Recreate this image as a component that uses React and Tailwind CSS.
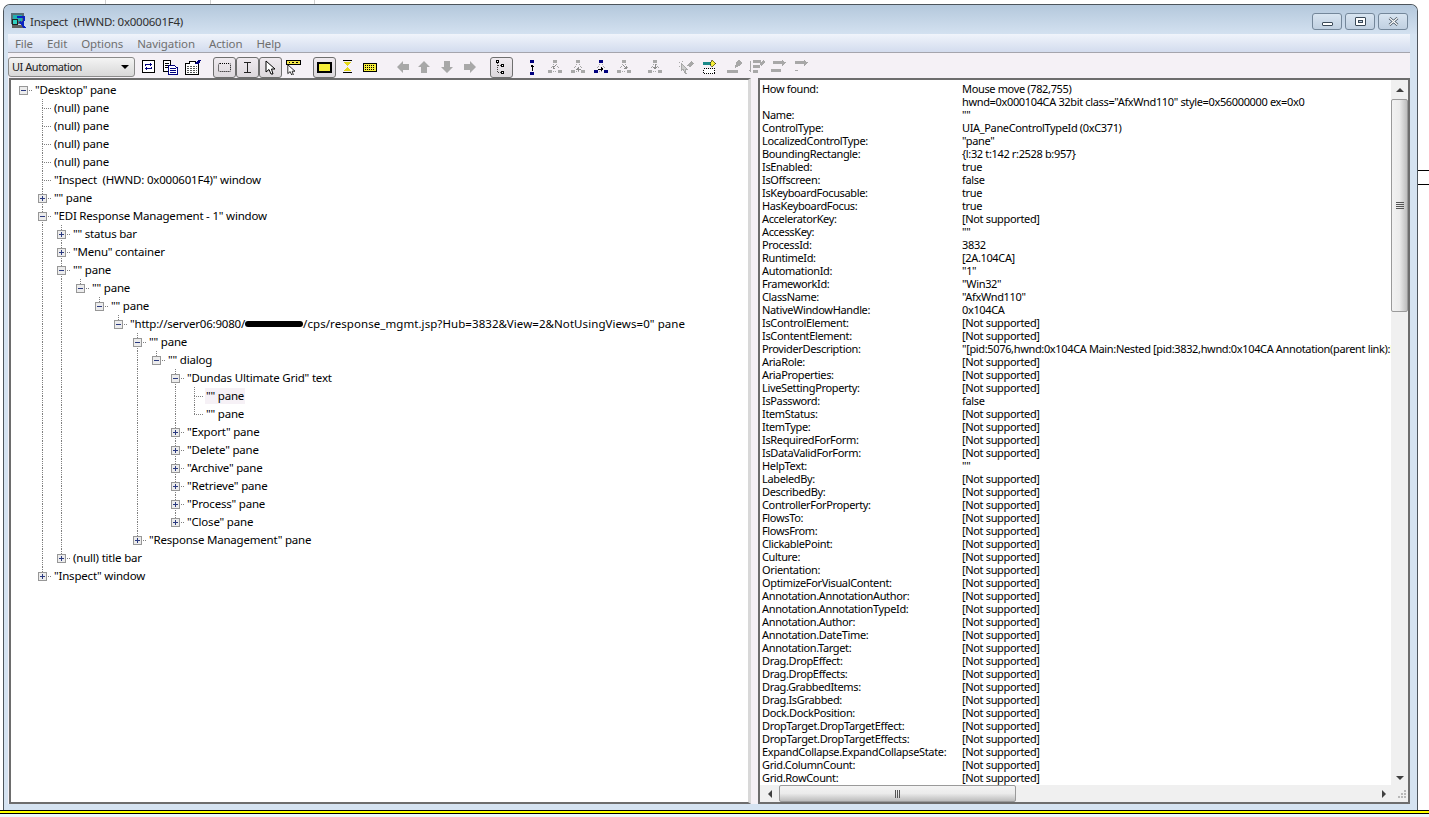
const NOT = '[Not supported]';

const props = [
  ['How found:', 'Mouse move (782,755)'],
  ['', 'hwnd=0x000104CA 32bit class="AfxWnd110" style=0x56000000 ex=0x0'],
  ['Name:', '""'],
  ['ControlType:', 'UIA_PaneControlTypeId (0xC371)'],
  ['LocalizedControlType:', '"pane"'],
  ['BoundingRectangle:', '{l:32 t:142 r:2528 b:957}'],
  ['IsEnabled:', 'true'],
  ['IsOffscreen:', 'false'],
  ['IsKeyboardFocusable:', 'true'],
  ['HasKeyboardFocus:', 'true'],
  ['AcceleratorKey:', NOT],
  ['AccessKey:', '""'],
  ['ProcessId:', '3832'],
  ['RuntimeId:', '[2A.104CA]'],
  ['AutomationId:', '"1"'],
  ['FrameworkId:', '"Win32"'],
  ['ClassName:', '"AfxWnd110"'],
  ['NativeWindowHandle:', '0x104CA'],
  ['IsControlElement:', NOT],
  ['IsContentElement:', NOT],
  ['ProviderDescription:', '"[pid:5076,hwnd:0x104CA Main:Nested [pid:3832,hwnd:0x104CA Annotation(parent link):M'],
  ['AriaRole:', NOT],
  ['AriaProperties:', NOT],
  ['LiveSettingProperty:', NOT],
  ['IsPassword:', 'false'],
  ['ItemStatus:', NOT],
  ['ItemType:', NOT],
  ['IsRequiredForForm:', NOT],
  ['IsDataValidForForm:', NOT],
  ['HelpText:', '""'],
  ['LabeledBy:', NOT],
  ['DescribedBy:', NOT],
  ['ControllerForProperty:', NOT],
  ['FlowsTo:', NOT],
  ['FlowsFrom:', NOT],
  ['ClickablePoint:', NOT],
  ['Culture:', NOT],
  ['Orientation:', NOT],
  ['OptimizeForVisualContent:', NOT],
  ['Annotation.AnnotationAuthor:', NOT],
  ['Annotation.AnnotationTypeId:', NOT],
  ['Annotation.Author:', NOT],
  ['Annotation.DateTime:', NOT],
  ['Annotation.Target:', NOT],
  ['Drag.DropEffect:', NOT],
  ['Drag.DropEffects:', NOT],
  ['Drag.GrabbedItems:', NOT],
  ['Drag.IsGrabbed:', NOT],
  ['Dock.DockPosition:', NOT],
  ['DropTarget.DropTargetEffect:', NOT],
  ['DropTarget.DropTargetEffects:', NOT],
  ['ExpandCollapse.ExpandCollapseState:', NOT],
  ['Grid.ColumnCount:', NOT],
  ['Grid.RowCount:', NOT],
];

const tree = {
  label: '"Desktop" pane',
  open: true,
  children: [
    { label: '(null) pane' },
    { label: '(null) pane' },
    { label: '(null) pane' },
    { label: '(null) pane' },
    { label: '"Inspect  (HWND: 0x000601F4)" window' },
    { label: '"" pane', open: false },
    {
      label: '"EDI Response Management - 1" window',
      open: true,
      children: [
        { label: '"" status bar', open: false },
        { label: '"Menu" container', open: false },
        {
          label: '"" pane',
          open: true,
          children: [
            {
              label: '"" pane',
              open: true,
              children: [
                {
                  label: '"" pane',
                  open: true,
                  children: [
                    {
                      url: true,
                      open: true,
                      children: [
                        {
                          label: '"" pane',
                          open: true,
                          children: [
                            {
                              label: '"" dialog',
                              open: true,
                              children: [
                                {
                                  label: '"Dundas Ultimate Grid" text',
                                  open: true,
                                  children: [
                                    { label: '"" pane', hover: true },
                                    { label: '"" pane' },
                                  ],
                                },
                                { label: '"Export" pane', open: false },
                                { label: '"Delete" pane', open: false },
                                { label: '"Archive" pane', open: false },
                                { label: '"Retrieve" pane', open: false },
                                { label: '"Process" pane', open: false },
                                { label: '"Close" pane', open: false },
                              ],
                            },
                          ],
                        },
                        { label: '"Response Management" pane', open: false },
                      ],
                    },
                  ],
                },
              ],
            },
          ],
        },
        { label: '(null) title bar', open: false },
      ],
    },
    { label: '"Inspect" window', open: false },
  ],
};

function Guide({ up, down, stub, open }) {
  return (
    <svg width="19" height="18" className="shrink-0" shapeRendering="crispEdges">
      {up && <line x1="9.5" y1="0" x2="9.5" y2="9" stroke="#808080" strokeDasharray="1 1" />}
      {down && <line x1="9.5" y1="9" x2="9.5" y2="18" stroke="#808080" strokeDasharray="1 1" />}
      {stub && <line x1="9" y1="9.5" x2="19" y2="9.5" stroke="#808080" strokeDasharray="1 1" />}
      {open !== undefined && (
        <>
          <rect x="5.5" y="5.5" width="8" height="8" fill="#ececec" stroke="#979797" />
          <line x1="7" y1="9.5" x2="12" y2="9.5" stroke="#2b3a80" />
          {!open && <line x1="9.5" y1="7" x2="9.5" y2="12" stroke="#2b3a80" />}
        </>
      )}
    </svg>
  );
}

function TreeNode({ node, trail, last, root }) {
  return (
    <>
      <div className="flex h-[18px] items-center">
        {trail.map((more, i) => (
          <Guide key={i} up={more} down={more} />
        ))}
        <Guide up={!root} down={!root && !last} stub open={node.open} />
        <span
          className={`ml-[1px] whitespace-pre px-[1px] leading-[16px] ${node.hover ? 'bg-[#f6f1f6]' : ''}`}
        >
          {node.url ? (
            <>
              "http://server06:9080/
              <span className="inline-block h-[6px] w-[58px] rounded-full bg-black align-[1px]" />
              <span className="tracking-[0.07px]">
                /cps/response_mgmt.jsp?Hub=3832&amp;View=2&amp;NotUsingViews=0" pane
              </span>
            </>
          ) : (
            node.label
          )}
        </span>
      </div>
      {node.children &&
        node.children.map((child, i) => (
          <TreeNode
            key={i}
            node={child}
            trail={root ? [false] : [...trail, !last]}
            last={i === node.children.length - 1}
          />
        ))}
    </>
  );
}

function ToolBtn({ children, className = '' }) {
  return (
    <div
      className={`flex h-[21px] w-[23px] shrink-0 items-center justify-center rounded-[3px] border border-[#6f6f6f] bg-gradient-to-b from-[#efeaef] to-[#dcd8dc] ${className}`}
    >
      {children}
    </div>
  );
}

function Ic({ w = 16, h = 16, children, className = '' }) {
  return (
    <svg
      width={w}
      height={h}
      viewBox={`0 0 ${w} ${h}`}
      shapeRendering="crispEdges"
      className={`shrink-0 ${className}`}
    >
      {children}
    </svg>
  );
}

function Arrow({ dir, className }) {
  const paths = {
    left: 'M1 7 L7 1 V4 H13 V10 H7 V13 Z',
    up: 'M7 1 L13 7 H10 V13 H4 V7 H1 Z',
    down: 'M7 13 L13 7 H10 V1 H4 V7 H1 Z',
    right: 'M13 7 L7 1 V4 H1 V10 H7 V13 Z',
  };
  return (
    <Ic w={14} h={14} className={className}>
      <path d={paths[dir]} fill="#a8a8a8" shapeRendering="auto" />
    </Ic>
  );
}

function TreeIc({ dark, mark, className }) {
  const c = dark ? '#00007f' : '#a8a8a8';
  return (
    <Ic w={14} h={14} className={className}>
      <rect x="5" y="0" width="4" height="3" fill={c} />
      <rect x="0" y="10" width="4" height="3" fill={c} />
      <rect x="10" y="10" width="4" height="3" fill={c} />
      <path d="M6 4 L3 9 M8 4 L11 9 M5 11.5 H9" stroke="#a8a8a8" strokeDasharray="1 1" fill="none" />
      {mark === 'right' && <path d="M4 9 H9 M7 7 V11 M8 8 V10" stroke={dark ? '#000' : '#8c8c8c'} />}
      {mark === 'left' && <path d="M10 9 H5 M7 7 V11 M6 8 V10" stroke="#8c8c8c" />}
      {mark === 'in' && <path d="M7 4 V9 M5 7 H9 M6 8 H8" stroke="#8c8c8c" />}
      {mark === 'dl' && <path d="M8 5 L5 8 M5 6 V8 H7" stroke="#8c8c8c" fill="none" />}
      {mark === 'dr' && <path d="M6 5 L9 8 M9 6 V8 H7" stroke="#8c8c8c" fill="none" />}
    </Ic>
  );
}

function Cursor() {
  return (
    <path
      d="M1 1 V12 L4 9.5 L6 14 H8 L6.5 9 H10 Z"
      fill="#fff"
      stroke="#000"
      shapeRendering="auto"
      strokeWidth="1"
    />
  );
}

function DisabledAction({ rows, className }) {
  return (
    <Ic w={17} h={14} className={className}>
      {rows}
    </Ic>
  );
}

function Toolbar() {
  return (
    <div className="flex h-[25px] shrink-0 items-center bg-[#f5f1f6] pt-[3px]">
      <div className="flex h-[20px] w-[127px] shrink-0 items-center justify-between rounded-[3px] border border-[#8a8a8a] bg-gradient-to-b from-[#f4f4f4] to-[#d8d8d8] pl-[3px] pr-[5px] text-[11px] tracking-[-0.45px] text-[#222]">
        <span>UI Automation</span>
        <span className="h-0 w-0 border-x-[4px] border-t-[4px] border-x-transparent border-t-black" />
      </div>
      <Ic w={13} h={14} className="ml-[7px]">
        <rect x="0.5" y="0.5" width="12" height="12" fill="#fff" stroke="#000" />
        <path d="M3 6 V4 H8 V2.5 L10 4.5 L8 6.5 V5 H4 V6 M10 7 V9 H5 V10.5 L3 8.5 L5 6.5 V8 H9 V7" fill="#00007f" />
      </Ic>
      <Ic w={16} h={15} className="ml-[7px]">
        <path d="M1.5 .5 H8.5 V11.5 H1.5 Z" fill="#fff" stroke="#000" />
        <path d="M3 3.5 H7 M3 5.5 H7 M3 7.5 H7" stroke="#000" />
        <path d="M6.5 5.5 H12 L15.5 8 V14.5 H6.5 Z" fill="#fff" stroke="#00007f" />
        <path d="M8 8.5 H14 M8 10.5 H14 M8 12.5 H14" stroke="#00007f" />
      </Ic>
      <Ic w={18} h={16} className="ml-[6px]">
        <path d="M1.5 4.5 H5 V2.5 H11 V4.5 H14.5 V15.5 H1.5 Z" fill="#fff" stroke="#000" />
        <path d="M3 7.5 H13 M3 9.5 H13 M3 11.5 H13 M3 13.5 H13" stroke="#555" strokeDasharray="2 1" />
        <path d="M11 5 L14 1 H17 L15 5 Z" fill="#00007f" />
      </Ic>
      <div className="ml-[11px] flex">
        <ToolBtn>
          <div className="h-[9px] w-[13px] rounded-[2px] border border-dotted border-black" />
        </ToolBtn>
        <ToolBtn>
          <Ic w={7} h={11}>
            <path d="M0 .5 H7 M3.5 0 V11 M0 10.5 H7" stroke="#222" />
          </Ic>
        </ToolBtn>
        <ToolBtn>
          <Ic w={11} h={15}>
            <Cursor />
          </Ic>
        </ToolBtn>
      </div>
      <Ic w={15} h={15} className="ml-[4px]">
        <rect x="0.5" y="0.5" width="14" height="4" fill="#f4e84a" stroke="#000" />
        <path d="M2.5 2.5 H4 M6 2.5 H8 M10 2.5 H12" stroke="#000" />
        <g transform="translate(1,4) scale(.8)">
          <Cursor />
        </g>
      </Ic>
      <ToolBtn className="ml-[12px]">
        <div className="h-[11px] w-[15px] border-2 border-black bg-[#f6ee3a] [box-shadow:inset_0_0_0_1px_#f6ee3a]" />
      </ToolBtn>
      <Ic w={9} h={14} className="ml-[7px]">
        <path d="M0 .5 H9 M0 12.5 H9" stroke="#000" />
        <path d="M1 2 H8 L4.5 6 Z M1 11 H8 L4.5 7 Z" fill="#e5d91c" />
      </Ic>
      <Ic w={14} h={9} className="ml-[11px]">
        <rect x="0.5" y="0.5" width="13" height="8" fill="#f6ee3a" stroke="#000" />
        <path d="M2 2.5 H12 M2 4.5 H12 M2 6.5 H12" stroke="#000" strokeDasharray="1 1" />
      </Ic>
      <Arrow dir="left" className="ml-[19px]" />
      <Arrow dir="up" className="ml-[7px]" />
      <Arrow dir="down" className="ml-[9px]" />
      <Arrow dir="right" className="ml-[9px]" />
      <ToolBtn className="ml-[13px]">
        <Ic w={14} h={15}>
          <rect x="1.5" y="0.5" width="2" height="2" fill="#fff" stroke="#000" />
          <rect x="6.5" y="4.5" width="2" height="2" fill="#fff" stroke="#000" />
          <rect x="6.5" y="11.5" width="2" height="2" fill="#fff" stroke="#000" />
          <path d="M2.5 3 V12.5 H6 M3 5.5 H6" stroke="#444" strokeDasharray="1 1" fill="none" />
        </Ic>
      </ToolBtn>
      <Ic w={5} h={15} className="ml-[17px]">
        <rect x="0" y="0" width="4" height="3" fill="#00007f" />
        <rect x="0" y="12" width="4" height="3" fill="#00007f" />
        <path d="M2 5 V11 M0.5 6.5 H3.5 M1 5.5 H3" stroke="#000" />
      </Ic>
      <TreeIc mark="dl" className="ml-[13px]" />
      <TreeIc mark="left" className="ml-[9px]" />
      <TreeIc dark mark="right" className="ml-[9px]" />
      <TreeIc mark="dr" className="ml-[9px]" />
      <TreeIc mark="in" className="ml-[17px]" />
      <Ic w={15} h={15} className="ml-[17px]">
        <path d="M2 3 V11 L4 9 L6 13 H7 L6 9 H8 Z" fill="#ccc" stroke="#a8a8a8" />
        <path d="M8 6 L12 1 L15 3 L11 7 Z" fill="#a8a8a8" />
        <path d="M0 6 H1 M3 1 V2 M0 2 H1" stroke="#a8a8a8" />
      </Ic>
      <Ic w={14} h={15} className="ml-[9px]">
        <path d="M0 2 H9 V5 H0 Z" fill="#1c8a8a" />
        <path d="M9 0 L13 3.5 L9 7 L7 3.5 Z" fill="#f6ee3a" stroke="#000" strokeWidth=".5" />
        <rect x="0.5" y="8.5" width="11" height="5" fill="#fff" stroke="#000" strokeDasharray="1 1" />
      </Ic>
      <DisabledAction
        className="ml-[10px]"
        rows={
          <>
            <path d="M0 10 H11 V13 H0 Z" fill="#a8a8a8" />
            <path d="M9 2 L12 0 L15 3 L12 6 L8 8 Z" fill="#a8a8a8" />
          </>
        }
      />
      <DisabledAction
        className="ml-[5px]"
        rows={
          <>
            <path d="M1 1 V12 M0 10 H2" stroke="#a8a8a8" />
            <path d="M4 0 H12 V3 H4 Z M4 5 H11 V8 H4 Z M4 10 H9 V13 H4 Z" fill="#a8a8a8" />
            <path d="M11 3 L14 0 L16 2 L12 6 Z" fill="#a8a8a8" />
          </>
        }
      />
      <DisabledAction
        className="ml-[5px]"
        rows={
          <>
            <path d="M2 1 H11 V4 H2 Z M0 9 H10 V12 H0 Z" fill="#a8a8a8" />
            <path d="M11 0 L15 2.5 L11 6 Z" fill="#a8a8a8" />
          </>
        }
      />
      <DisabledAction
        className="ml-[5px]"
        rows={
          <>
            <path d="M2 1 H11 V4 H2 Z" fill="#a8a8a8" />
            <path d="M11 0 L15 2.5 L11 6 Z M2 10 H5 V11 H2 Z" fill="#a8a8a8" />
          </>
        }
      />
    </div>
  );
}

function ScrollArrow({ dir }) {
  const cls = {
    up: 'border-x-[4px] border-b-[4px] border-x-transparent border-b-[#404040]',
    down: 'border-x-[4px] border-t-[4px] border-x-transparent border-t-[#404040]',
    left: 'border-y-[4px] border-r-[4px] border-y-transparent border-r-[#404040]',
    right: 'border-y-[4px] border-l-[4px] border-y-transparent border-l-[#404040]',
  };
  return <span className={`h-0 w-0 ${cls[dir]}`} />;
}

export default function App() {
  return (
    <div className="flex h-[817px] w-[1429px] flex-col overflow-hidden bg-white font-['Liberation_Sans',sans-serif] text-black">
      {/* bits of whatever sits behind the window */}
      <div className="flex h-[4px] shrink-0">
        <div className="h-full w-[106px] border-r border-[#cfcfcf]" />
        <div className="h-full w-[105px] border-r border-[#cfcfcf]" />
        <div className="h-full w-[104px] border-r border-[#cfcfcf]" />
      </div>

      <div className="flex h-[806px] shrink-0">
        <div className="ml-[3px] flex h-full w-[1415px] shrink-0 flex-col rounded-t-[7px] border border-b-0 border-[#4d555c] bg-[#d5e3f1]">
          <div className="flex h-[29px] shrink-0 items-center rounded-t-[6px] bg-gradient-to-b from-[#b4c8dc] to-[#d3e1f0] pl-[6px] pr-[9px] pt-[4px]">
            <Ic w={17} h={17}>
              <rect x="1" y="0" width="13" height="11" fill="#5a6f78" />
              <rect x="3" y="2" width="9" height="6" fill="#22b0b0" />
              <rect x="2" y="12" width="12" height="3" fill="#606060" />
              <path d="M7 4 L14 4 L13 12 L10 9 L15 15" stroke="#0a24c0" strokeWidth="2" fill="none" />
              <circle cx="5" cy="9" r="3" fill="#2fd0c0" stroke="#222" />
            </Ic>
            <span className="ml-[3px] whitespace-pre font-['Open_Sans',sans-serif] text-[11.5px] tracking-[-0.25px] text-[#303030]">
              Inspect  (HWND: 0x000601F4)
            </span>
            <div className="ml-auto flex gap-[3px]">
              <div className="flex h-[17px] w-[30px] items-end justify-center rounded-[3px] border border-[#74879a] bg-gradient-to-b from-[#d9e5f1] to-[#c0d0e1] pb-[3px]">
                <div className="h-[4px] w-[11px] rounded-[1px] border border-[#3b4a58] bg-white" />
              </div>
              <div className="flex h-[17px] w-[30px] items-center justify-center rounded-[3px] border border-[#74879a] bg-gradient-to-b from-[#d9e5f1] to-[#c0d0e1]">
                <div className="flex h-[9px] w-[11px] items-center justify-center rounded-[1px] border border-[#3b4a58] bg-white">
                  <div className="h-[3px] w-[5px] border border-[#3b4a58] bg-[#c0d0e1]" />
                </div>
              </div>
              <div className="flex h-[17px] w-[30px] items-center justify-center rounded-[3px] border border-[#74879a] bg-gradient-to-b from-[#d9e5f1] to-[#c0d0e1]">
                <svg width="11" height="9" viewBox="0 0 11 9">
                  <path d="M1.5 1 L9.5 8 M9.5 1 L1.5 8" stroke="#3b4a58" strokeWidth="2.6" />
                  <path d="M1.5 1 L9.5 8 M9.5 1 L1.5 8" stroke="#fff" strokeWidth="1.2" />
                </svg>
              </div>
            </div>
          </div>

          <div className="mb-[6px] ml-[4px] mr-[7px] flex min-h-0 flex-1 flex-col">
            <div className="flex h-[19px] shrink-0 items-center gap-[14px] border-b border-[#a5a5ad] bg-gradient-to-b from-[#f0f4fb] to-[#d3dcee] pl-[7px] pt-[1px] font-['Open_Sans',sans-serif] text-[11.5px] tracking-[-0.1px] text-[#6f6f6f]">
              <span>File</span>
              <span>Edit</span>
              <span>Options</span>
              <span>Navigation</span>
              <span>Action</span>
              <span>Help</span>
            </div>
            <Toolbar />

            <div className="flex min-h-0 flex-1 bg-[#f5f1f6]">
              <div className="ml-[1px] h-full w-[742px] shrink-0 overflow-hidden border-2 border-r-[3px] border-[#6d6d6d] border-r-[#d8d8d8] bg-white pl-[3px] pt-[1px] font-['Open_Sans',sans-serif] text-[11.5px] tracking-[-0.2px] text-black">
                <TreeNode node={tree} trail={[]} last root />
              </div>
              <div className="ml-[7px] flex h-full min-w-0 flex-1 flex-col border-2 border-[#6d6d6d] bg-white text-[11px] tracking-[-0.35px]">
                <div className="flex min-h-0 flex-1">
                  <div className="min-w-0 flex-1 overflow-hidden pl-[2px] pt-[2px]">
                    {props.map(([k, v], i) => (
                      <div key={i} className="flex h-[13px] whitespace-nowrap leading-[13px] text-black">
                        <span className="w-[200px] shrink-0">{k}</span>
                        <span>{v}</span>
                      </div>
                    ))}
                  </div>
                  <div className="flex w-[17px] shrink-0 flex-col bg-[#f0f0f0]">
                    <div className="flex h-[19px] shrink-0 items-center justify-center">
                      <ScrollArrow dir="up" />
                    </div>
                    <div className="flex h-[213px] shrink-0 items-center justify-center rounded-[2px] border border-[#9a9a9a] bg-gradient-to-r from-[#f2f2f2] via-[#ebebeb] to-[#bdbdbd]">
                      <div className="flex w-[8px] flex-col gap-[1px]">
                        <div className="h-[1px] bg-[#555]" />
                        <div className="h-[1px] bg-[#555]" />
                        <div className="h-[1px] bg-[#555]" />
                        <div className="h-[1px] bg-[#555]" />
                      </div>
                    </div>
                    <div className="flex-1" />
                    <div className="flex h-[15px] shrink-0 items-center justify-center">
                      <ScrollArrow dir="down" />
                    </div>
                  </div>
                </div>
                <div className="flex h-[17px] shrink-0 items-center bg-[#f0f0f0]">
                  <div className="flex w-[19px] shrink-0 justify-center">
                    <ScrollArrow dir="left" />
                  </div>
                  <div className="flex h-[17px] w-[237px] shrink-0 items-center justify-center gap-[1px] rounded-[2px] border border-[#9a9a9a] bg-gradient-to-b from-[#f4f4f4] via-[#ebebeb] to-[#bdbdbd]">
                    <div className="h-[8px] w-[1px] bg-[#555]" />
                    <div className="h-[8px] w-[1px] bg-[#555]" />
                    <div className="h-[8px] w-[1px] bg-[#555]" />
                  </div>
                  <div className="flex-1" />
                  <div className="flex w-[15px] shrink-0 justify-center">
                    <ScrollArrow dir="right" />
                  </div>
                  <svg width="17" height="17" className="shrink-0" shapeRendering="crispEdges">
                    <path d="M13 5 h2 v2 h-2 z M10 8 h2 v2 h-2 z M13 8 h2 v2 h-2 z M7 11 h2 v2 h-2 z M10 11 h2 v2 h-2 z M13 11 h2 v2 h-2 z" fill="#b8b8b8" />
                  </svg>
                </div>
              </div>
            </div>
          </div>
        </div>
        <div className="flex flex-1 flex-col pt-[166px]">
          <div className="h-[1px] bg-black" />
          <div className="mt-[13px] h-[1px] bg-black" />
        </div>
      </div>

      <div className="h-[1px] shrink-0 bg-black" />
      <div className="h-[2px] shrink-0 bg-[#ffff00]" />
      <div className="h-[1px] shrink-0 bg-black" />
      <div className="flex-1 bg-[#eef6fd]" />
    </div>
  );
}
